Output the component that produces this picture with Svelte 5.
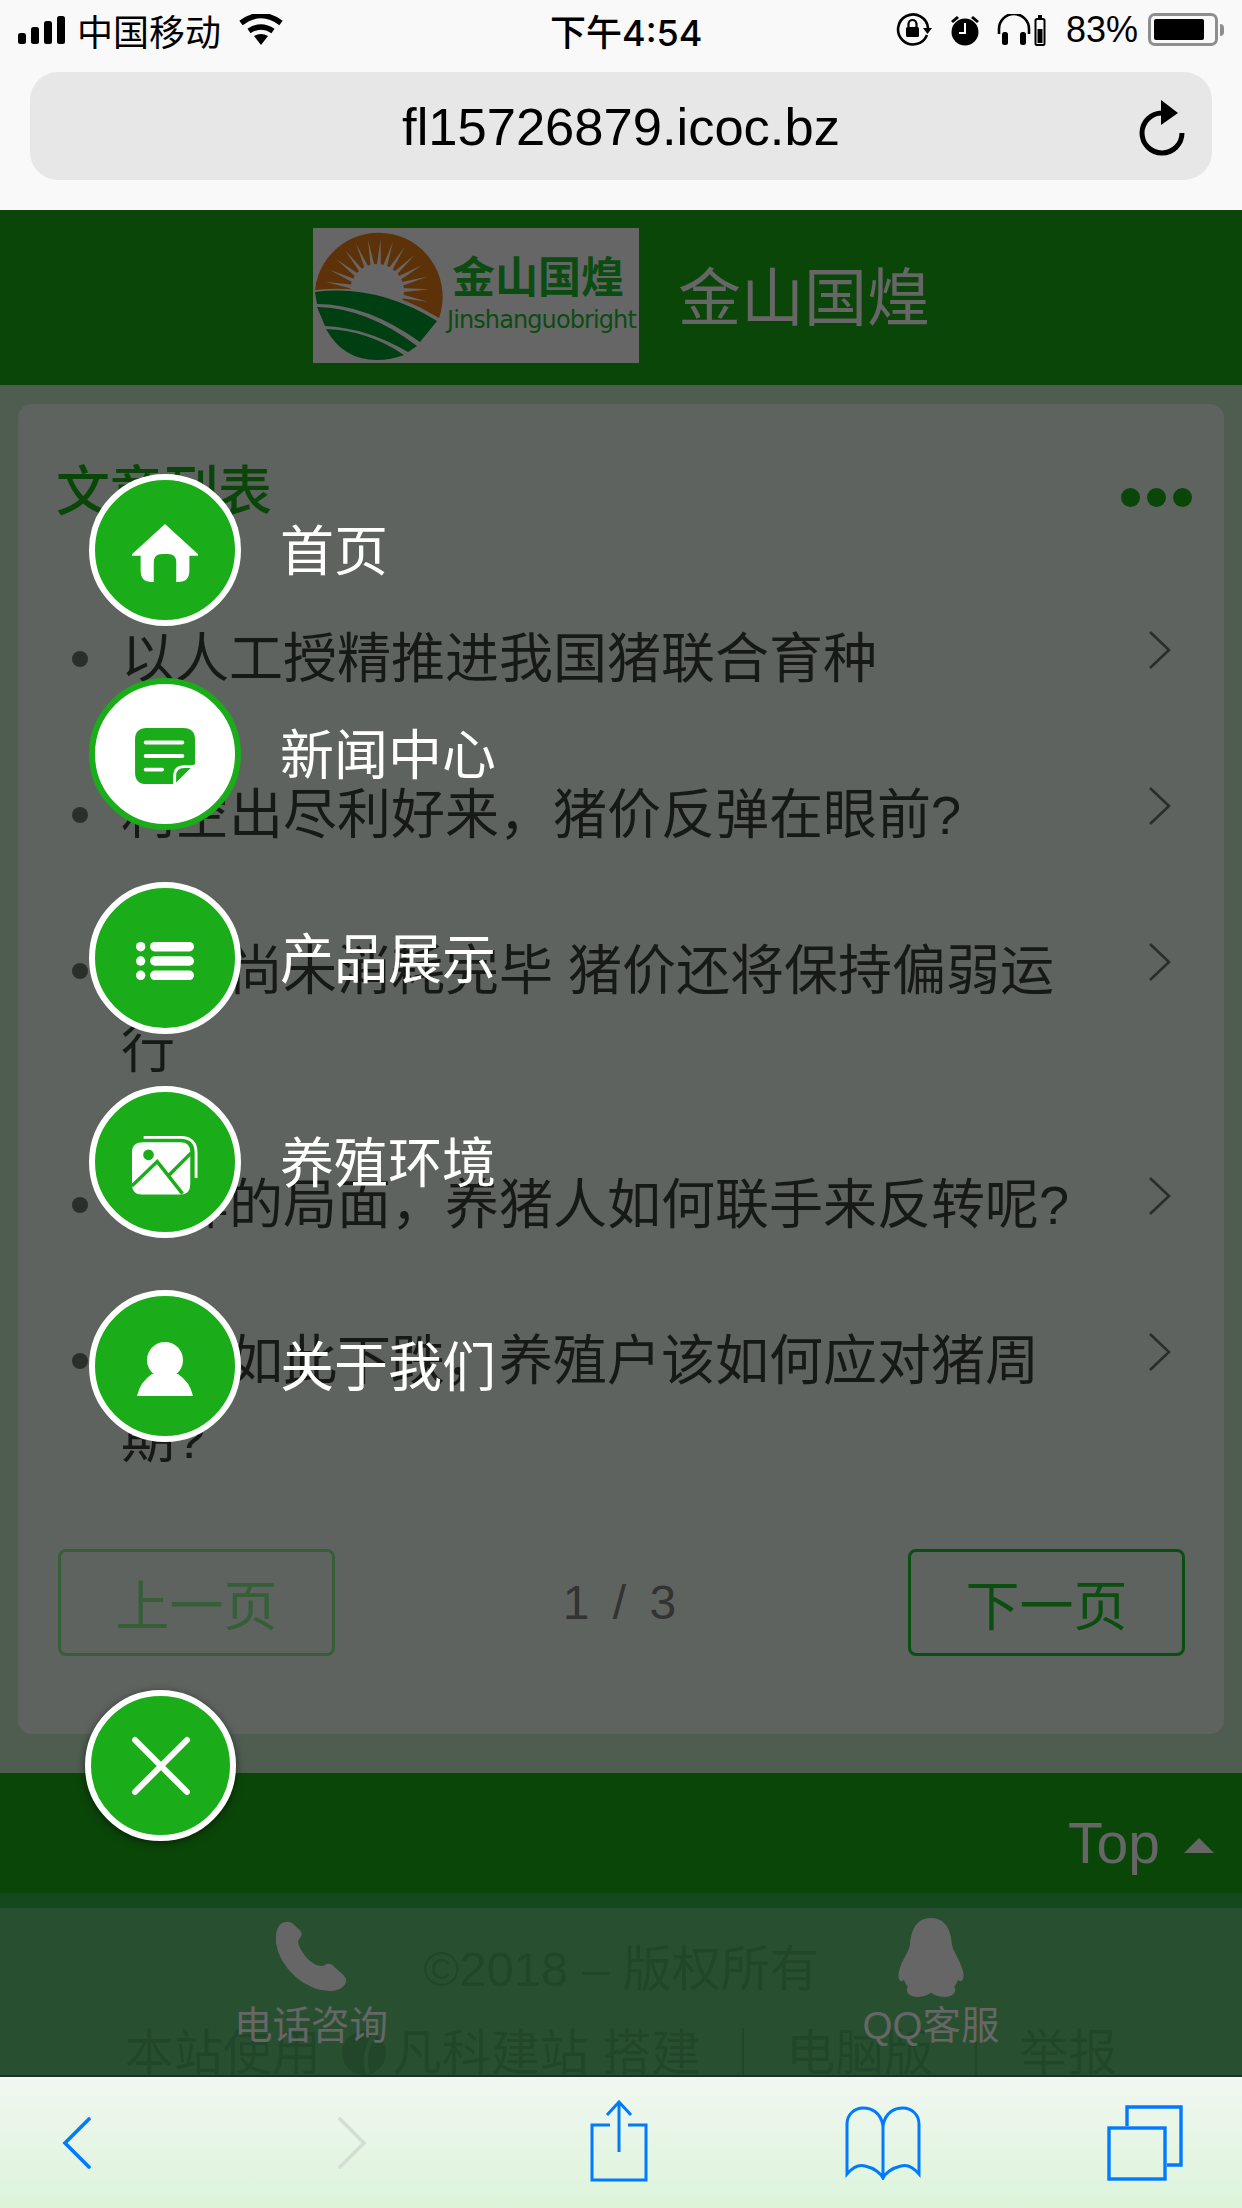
<script>
	const articles = [
		'以人工授精推进我国猪联合育种',
		'利空出尽利好来，猪价反弹在眼前?',
		'产能尚未消耗完毕 猪价还将保持偏弱运行',
		'这样的局面，养猪人如何联手来反转呢?',
		'猪价如此下跌，养殖户该如何应对猪周期?'
	];
	const menu = [
		{ label: '首页', icon: 'home' },
		{ label: '新闻中心', icon: 'news', active: true },
		{ label: '产品展示', icon: 'list' },
		{ label: '养殖环境', icon: 'photo' },
		{ label: '关于我们', icon: 'user' }
	];

	// sun rays of the logo, thin spikes around the dome
	const polar = (r, deg) => {
		const a = (deg * Math.PI) / 180;
		return `${(64 + r * Math.cos(a)).toFixed(1)},${(63 + r * Math.sin(a)).toFixed(1)}`;
	};
	const rays = Array.from({ length: 14 }, (_, i) => {
		const deg = -170 + i * 14;
		return `${polar(24, deg - 5)} ${polar(52, deg)} ${polar(24, deg + 5)}`;
	});
</script>

<div class="phone">
	<div class="status">
		<div class="status-left">
			<svg width="50" height="28" viewBox="0 0 50 28" fill="#000">
				<rect x="0" y="17" width="8" height="11" rx="2.5" />
				<rect x="13" y="11" width="8" height="17" rx="2.5" />
				<rect x="26" y="5" width="8" height="23" rx="2.5" />
				<rect x="39" y="0" width="8" height="28" rx="2.5" />
			</svg>
			<span class="carrier">中国移动</span>
			<svg width="44" height="32" viewBox="0 0 44 32">
				<path d="M22 31l-7-9q7-4 14 0z" fill="#000" />
				<path d="M10 17q12-8 24 0M2 9q20-15 40 0" fill="none" stroke="#000" stroke-width="5.5" />
			</svg>
		</div>
		<div class="time">下午4:54</div>
		<div class="status-right">
			<svg width="36" height="34" viewBox="0 0 36 34">
				<path d="M31 22a15 15 0 1 1 1-7" fill="none" stroke="#000" stroke-width="2.6" />
				<path d="M27 15h9l-4.500 6z" fill="#000" />
				<rect x="10" y="14" width="13" height="10" rx="1.500" />
				<path d="M12.500 14v-3a4 4 0 0 1 8 0v3" fill="none" stroke="#000" stroke-width="2.200" />
			</svg>
			<svg class="gap-alarm" width="30" height="32" viewBox="0 0 30 32">
				<circle cx="15" cy="18" r="13.500" />
				<path d="M15 9v10h-6" fill="none" stroke="#fff" stroke-width="2" />
				<path d="M1 7l6-5 2 2-6 5zM29 7l-6-5-2 2 6 5z" />
			</svg>
			<svg class="gap-phones" width="50" height="32" viewBox="0 0 50 32">
				<path d="M2 20v-5a15 15 0 0 1 30 0v5" fill="none" stroke="#000" stroke-width="2.600" />
				<rect x="5" y="18" width="6" height="13" rx="2.500" />
				<rect x="23" y="18" width="6" height="13" rx="2.500" />
				<rect x="38.500" y="5" width="9" height="26" rx="1.500" fill="none" stroke="#000" stroke-width="2" />
				<rect x="41" y="1" width="4" height="3" />
				<rect x="40.500" y="15" width="5" height="14" />
			</svg>
			<span class="battery-pct">83%</span>
			<div class="battery"><div class="battery-fill"></div></div>
			<div class="battery-nub"></div>
		</div>
	</div>

	<div class="address-wrap">
		<div class="address">
			<span>fl15726879.icoc.bz</span>
			<svg class="reload" width="46" height="56" viewBox="0 0 46 56">
				<path d="M23 13a20 20 0 1 0 20 20" fill="none" stroke="#000" stroke-width="5" />
				<path d="M22 0l17 13-17 12z" fill="#000" />
			</svg>
		</div>
	</div>

	<div class="page">
		<header class="site-head">
			<div class="logo">
				<svg class="logo-mark" width="130" height="135" viewBox="0 0 130 135">
					<path d="M2 62A64 64 0 1 1 126 90L108 80Q60 56 2 62z" fill="#5e3208" />
					{#each rays as points}
						<polygon {points} fill="#666" />
					{/each}
					<circle cx="64" cy="63" r="27" fill="#666" />
					<path d="M2 64Q64 56 124 93L107 114Q54 76 4 76z" fill="#003f12" />
					<path d="M4 79Q54 80 104 118L95 124Q54 100 12 98z" fill="#003f12" />
					<path d="M13 101Q54 102 91 127Q78 132 64 132Q30 132 13 101z" fill="#003f12" />
				</svg>
				<div class="logo-text">
					<span class="logo-cn">金山国煌</span>
					<span class="logo-en">Jinshanguobright</span>
				</div>
			</div>
			<div class="site-name">金山国煌</div>
		</header>

		<section class="card">
			<div class="card-head">
				<h2>文章列表</h2>
				<div class="more"><i></i><i></i><i></i></div>
			</div>
			<ul>
				{#each articles as text}
					<li>
						<span class="dot"></span>
						<span class="article">{text}</span>
						<svg class="chev" width="24" height="40" viewBox="0 0 24 40">
							<path d="M2 2l19 18L2 38" fill="none" stroke="#2a2d2b" stroke-width="2.600" />
						</svg>
					</li>
				{/each}
			</ul>
			<div class="pager">
				<div class="pg-btn off">上一页</div>
				<div class="pg-num">1 / 3</div>
				<div class="pg-btn">下一页</div>
			</div>
		</section>

		<div class="top-band">
			<span>Top</span>
			<div class="caret"></div>
		</div>

		<footer>
			<div class="copy">©2018 – 版权所有</div>
			<div class="links">
				<span>本站使用</span>
				<svg class="leaf" width="46" height="46" viewBox="0 0 46 46">
					<circle cx="23" cy="23" r="22" fill="#05350f" />
					<path d="M36 2Q20 20 27 45" fill="none" stroke="#13491d" stroke-width="4" />
				</svg>
				<span>凡科建站 搭建</span>
				<b></b>
				<span>电脑版</span>
				<b></b>
				<span>举报</span>
			</div>
		</footer>

		<nav class="float-nav">
			<div class="float-item">
				<svg class="phone-icon" width="71" height="70" viewBox="0 0 58 70" preserveAspectRatio="none" fill="#666">
					<path d="M8 1Q12 0 15 4L20 10Q22 13 20 16L18 20Q18 24 21 30Q25 38 30 42Q33 45 37 45Q40 45 41 43Q44 42 46 44L55 54Q59 59 56 64Q52 70 44 70Q30 70 16 56Q2 40 0 22Q-1 10 3 4Q5 1 8 1z" />
				</svg>
				<span>电话咨询</span>
			</div>
			<div class="float-item qq">
				<svg class="qq-icon" width="72" height="80" viewBox="0 0 72 78" preserveAspectRatio="none" fill="#666">
					<path d="M36 0c14 0 20 11 21 26 1 7 8 14 11 26 2 8-2 12-5 8-1 3-2 5-4 7 3 3 1 10-10 10-6 0-10-2-13-4-3 2-7 4-13 4-11 0-13-7-10-10-2-2-3-4-4-7-3 4-7 0-5-8 3-12 10-19 11-26C16 11 22 0 36 0z" />
				</svg>
				<span>QQ客服</span>
			</div>
		</nav>

		<div class="menu">
			{#each menu as item}
				<div class="menu-item">
					<div class="bubble" class:active={item.active}>
						{#if item.icon === 'home'}
							<svg width="68" height="60" viewBox="0 0 72 64" fill="#fff">
								<path d="M36 1L71 33q1 2-1 2H62v16q0 12-12 12H48V42q0-9-9-9h-6q-9 0-9 9v21h-2Q10 63 10 51V35H2q-2 0-1-2z" />
							</svg>
						{:else if item.icon === 'news'}
							<svg width="60" height="58" viewBox="0 0 62 60">
								<path d="M12 0h38q12 0 12 12v25L41 58H12Q0 58 0 46V12Q0 0 12 0z" fill="#1aad19" />
								<path d="M11 15h38M11 29h38M11 43h17" stroke="#fff" stroke-width="4" stroke-linecap="round" />
								<path d="M41 59v-9q0-10 10-10h11" fill="none" stroke="#fff" stroke-width="3" />
							</svg>
						{:else if item.icon === 'list'}
							<svg width="58" height="40" viewBox="0 0 62 42" preserveAspectRatio="none" fill="#fff">
								<circle cx="5" cy="6" r="5" />
								<circle cx="5" cy="21" r="5" />
								<circle cx="5" cy="36" r="5" />
								<rect x="15" y="1" width="47" height="10" rx="5" />
								<rect x="15" y="16" width="47" height="10" rx="5" />
								<rect x="15" y="31" width="47" height="10" rx="5" />
							</svg>
						{:else if item.icon === 'photo'}
							<svg width="66" height="61" viewBox="0 0 68 62">
								<path d="M12 2h38q16 0 16 16v26" fill="none" stroke="#fff" stroke-width="3" />
								<path d="M12 7h38q10 0 10 10v33q0 11-10 11H10Q0 61 0 50V17Q0 7 12 7z" fill="#fff" />
								<circle cx="17" cy="20" r="5.500" fill="#1aad19" />
								<path d="M0 52l26-25 26 33M38 41l23-23" fill="none" stroke="#1aad19" stroke-width="3.500" />
							</svg>
						{:else if item.icon === 'user'}
							<svg width="56" height="54" viewBox="0 0 56 54" fill="#fff">
								<circle cx="28" cy="18" r="18" />
								<path d="M15 32Q3 40 0 54h56Q53 40 41 32z" />
							</svg>
						{/if}
					</div>
					<span class="menu-label">{item.label}</span>
				</div>
			{/each}
		</div>

		<div class="close">
			<svg width="60" height="60" viewBox="0 0 60 60">
				<path d="M4 4l52 52M56 4L4 56" stroke="#fff" stroke-width="6" stroke-linecap="round" />
			</svg>
		</div>
	</div>

	<div class="toolbar">
		<svg width="32" height="52" viewBox="0 0 32 52">
			<path d="M28 2L4 26l24 24" fill="none" stroke="#007aff" stroke-width="3.600" stroke-linecap="round" />
		</svg>
		<svg width="32" height="52" viewBox="0 0 32 52">
			<path d="M4 2l24 24L4 50" fill="none" stroke="#d3dfd3" stroke-width="3.600" stroke-linecap="round" />
		</svg>
		<svg class="share" width="58" height="82" viewBox="0 0 58 82" fill="none" stroke="#007aff" stroke-width="3">
			<path d="M20 25H2v55h54V25H38" />
			<path d="M29 52V2M17 15L29 2l12 13" />
		</svg>
		<svg width="76" height="74" viewBox="0 0 76 74" fill="none" stroke="#007aff" stroke-width="3">
			<path d="M38 20C36 6 26 2 18 2 10 2 2 8 2 18v50c6-7 12-10 18-8 10 2 16 8 18 12 2-4 8-10 18-12 6-2 12 1 18 8V18c0-10-8-16-16-16-8 0-18 4-20 18v52" />
		</svg>
		<svg width="76" height="76" viewBox="0 0 76 76" fill="none" stroke="#007aff" stroke-width="3.400">
			<rect x="2" y="23" width="56" height="51" />
			<path d="M20 21V2h54v58H60" />
		</svg>
	</div>
</div>

<style>
	:global(body) {
		margin: 0;
		background: #4f5d50;
	}

	.phone {
		width: 1242px;
		height: 2208px;
		display: flex;
		flex-direction: column;
		overflow: hidden;
		font-family: 'Liberation Sans', 'Noto Sans CJK SC', sans-serif;
	}

	.status {
		height: 62px;
		flex: none;
		box-sizing: border-box;
		display: flex;
		align-items: center;
		justify-content: space-between;
		background: #f9f9f9;
		color: #000;
		padding: 0 18px 3px 18px;
		position: relative;
	}

	.status-left,
	.status-right {
		display: flex;
		align-items: center;
	}

	.carrier {
		font-size: 36px;
		margin: 0 18px 0 9px;
	}

	.time {
		position: absolute;
		left: 550px;
		font-family: Inter, 'Noto Sans CJK SC', sans-serif;
		font-size: 36px;
		font-weight: 500;
	}

	.gap-alarm {
		margin-left: 18px;
	}

	.gap-phones {
		margin-left: 17px;
	}

	.battery-pct {
		font-size: 36px;
		margin-left: 19px;
		margin-right: 10px;
	}

	.battery {
		width: 70px;
		height: 33px;
		box-sizing: border-box;
		border: 3px solid #8e8e8e;
		border-radius: 7px;
		padding: 3px;
	}

	.battery-fill {
		width: 50px;
		height: 100%;
		background: #000;
		border-radius: 2px;
	}

	.battery-nub {
		width: 4px;
		height: 12px;
		margin-left: 2px;
		background: #8e8e8e;
		border-radius: 0 4px 4px 0;
	}

	.address-wrap {
		height: 148px;
		flex: none;
		box-sizing: border-box;
		padding: 10px 30px 0;
		background: #f9f9f9;
	}

	.address {
		height: 108px;
		border-radius: 28px;
		background: #e7e7e7;
		display: flex;
		align-items: center;
		justify-content: center;
		position: relative;
		font-size: 52.500px;
		color: #000;
	}

	.reload {
		position: absolute;
		right: 27px;
		top: 28px;
	}

	.page {
		flex: 1;
		min-height: 0;
		display: flex;
		flex-direction: column;
		position: relative;
		background: #4f5d50;
	}

	.site-head {
		height: 175px;
		flex: none;
		background: #0b4609;
		display: flex;
		align-items: center;
		padding-left: 313px;
		box-sizing: border-box;
	}

	.logo {
		width: 326px;
		height: 135px;
		background: #666;
		display: flex;
		align-items: center;
		box-sizing: border-box;
		overflow: hidden;
		margin-top: -4px;
	}

	.logo-mark {
		flex: none;
	}

	.logo-text {
		display: flex;
		flex-direction: column;
		align-items: flex-start;
		color: #0b4c12;
		margin-top: -6px;
	}

	.logo-cn {
		font-size: 43px;
		font-weight: 700;
		line-height: 54px;
		margin-left: 9px;
	}

	.logo-en {
		font-size: 24px;
		line-height: 30px;
		letter-spacing: -0.900px;
		margin-left: 4px;
		font-family: 'DejaVu Sans', sans-serif;
		white-space: nowrap;
	}

	.site-name {
		margin-left: 39px;
		font-size: 63px;
		color: #666;
		margin-top: -11px;
	}

	.card {
		flex: none;
		height: 1330px;
		box-sizing: border-box;
		margin: 19px 18px 39px;
		padding: 0 40px;
		background: #5e6360;
		border-radius: 14px;
		color: #171917;
	}

	.card-head {
		height: 86px;
		padding-top: 40px;
		display: flex;
		justify-content: space-between;
		align-items: center;
		color: #0b4609;
	}

	h2 {
		margin: 0 0 0 -2px;
		font-size: 54px;
		font-weight: 500;
	}

	.more {
		display: flex;
		gap: 7px;
		margin-right: -8px;
		margin-top: 20px;
	}

	.more i {
		width: 19px;
		height: 19px;
		border-radius: 50%;
		background: #0b4609;
	}

	ul {
		list-style: none;
		margin: 90px 0 0;
		padding: 0;
		display: flex;
		flex-direction: column;
		gap: 78px;
	}

	li {
		position: relative;
		padding: 0 110px 0 66px;
		font-size: 54px;
		line-height: 78px;
	}

	.article {
		margin-left: -3px;
		display: block;
	}

	.dot {
		position: absolute;
		left: 14px;
		top: 31px;
		width: 16px;
		height: 16px;
		border-radius: 50%;
		background: #2c2e2c;
	}

	.chev {
		position: absolute;
		right: 12px;
		top: 10px;
	}

	.pager {
		margin-top: 71px;
		display: flex;
		justify-content: space-between;
		align-items: center;
		position: relative;
		left: 1px;
	}

	.pg-btn {
		width: 277px;
		height: 107px;
		box-sizing: border-box;
		border: 3px solid #0b4f10;
		border-radius: 8px;
		display: flex;
		align-items: center;
		justify-content: center;
		font-size: 54px;
		color: #0b4f10;
	}

	.pg-btn.off {
		border-color: #365f38;
		color: #365f38;
		margin-left: -1px;
	}

	.pg-num {
		font-size: 48px;
		color: #333;
		word-spacing: 10px;
		margin-left: -4px;
	}

	.top-band {
		height: 120px;
		flex: none;
		background: #0b4609;
		display: flex;
		align-items: center;
		justify-content: flex-end;
		padding: 20px 28px 0 0;
		color: #666;
		font-size: 57px;
		box-sizing: border-box;
	}

	.caret {
		width: 0;
		height: 0;
		border-left: 15px solid transparent;
		border-right: 15px solid transparent;
		border-bottom: 15px solid #666;
		margin-left: 24px;
		margin-top: 4px;
	}

	footer {
		flex: 1;
		min-height: 0;
		background: #13491d;
		overflow: hidden;
		color: #05350f;
		font-size: 49px;
		line-height: 60px;
		text-align: center;
	}

	.copy {
		margin-top: 46px;
	}

	.links {
		margin-top: 24px;
		display: flex;
		justify-content: center;
		align-items: center;
		gap: 20px;
	}

	.links b {
		width: 2px;
		height: 50px;
		margin: 0 22px;
		background: #05350f;
	}

	.leaf {
		flex: none;
		margin-right: -14px;
	}

	.float-nav {
		position: absolute;
		left: 0;
		right: 0;
		bottom: 0;
		height: 167px;
		background: rgba(61, 87, 67, 0.5);
		display: flex;
		padding-left: 211px;
	}

	.float-item {
		width: 200px;
		display: flex;
		flex-direction: column;
		align-items: center;
		color: #666;
		font-size: 38.500px;
		line-height: 44px;
		white-space: nowrap;
	}

	.phone-icon {
		margin: 13px 0 13px;
	}

	.qq-icon {
		margin: 10px 0 6px;
	}

	.float-item.qq {
		margin-left: 420px;
	}

	.menu {
		position: absolute;
		left: 89px;
		top: 264px;
		display: flex;
		flex-direction: column;
		gap: 52px;
	}

	.menu-item {
		display: flex;
		align-items: center;
		gap: 39px;
	}

	.bubble {
		width: 152px;
		height: 152px;
		box-sizing: border-box;
		border-radius: 50%;
		border: 6px solid #fff;
		background: #1aad19;
		display: flex;
		align-items: center;
		justify-content: center;
	}

	.bubble svg {
		margin-top: 6px;
	}

	.bubble.active {
		border-color: #1aad19;
		background: #fff;
	}

	.menu-label {
		font-size: 54px;
		color: #fff;
		margin-top: -5px;
	}

	.close {
		position: absolute;
		left: 85px;
		top: 1480px;
		width: 151px;
		height: 151px;
		box-sizing: border-box;
		border-radius: 50%;
		border: 6px solid #fff;
		background: #1aad19;
		box-shadow: 0 2px 8px rgba(0, 0, 0, 0.5);
		display: flex;
		align-items: center;
		justify-content: center;
	}

	.toolbar {
		height: 133px;
		flex: none;
		box-sizing: border-box;
		border-top: 2px solid #20302a;
		background: linear-gradient(#f1f7f1, #dcf4da);
		display: grid;
		grid-template-columns: 154px 396px 138px 390px 134px;
		align-items: center;
		justify-items: center;
		position: relative;
		z-index: 1;
	}

	.share {
		margin-top: -3px;
	}
</style>
